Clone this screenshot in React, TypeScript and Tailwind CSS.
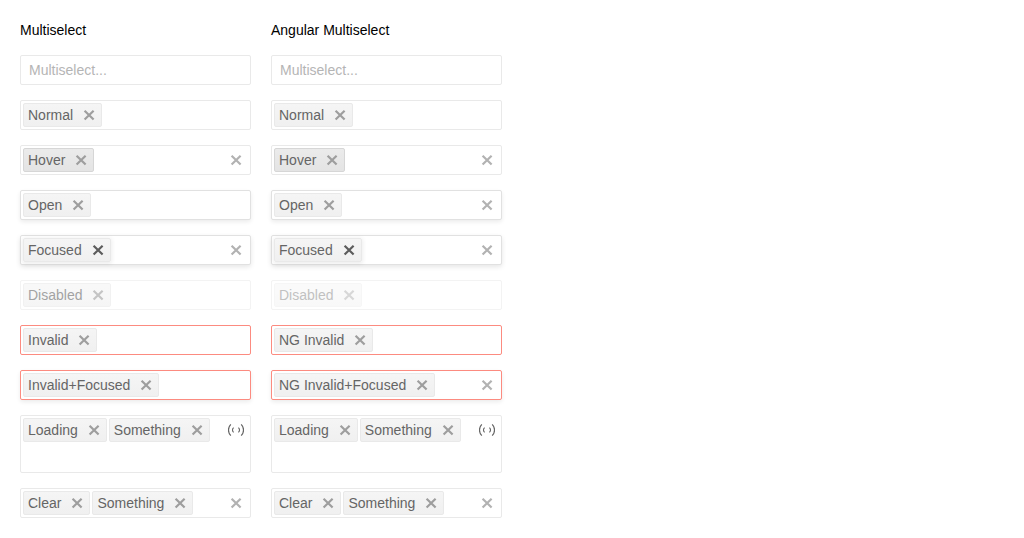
import React from 'react';
import clsx from 'clsx';

type Look = 'normal' | 'hover' | 'open' | 'focused' | 'disabled' | 'faded' | 'invalid' | 'invalidFocused';
type Trailing = 'clear' | 'loading';

interface Field {
  tags: string[];
  look: Look;
  trailing?: Trailing;
  wrapInput?: boolean;
}

const multiselect: Field[] = [
  { tags: [], look: 'normal' },
  { tags: ['Normal'], look: 'normal' },
  { tags: ['Hover'], look: 'hover', trailing: 'clear' },
  { tags: ['Open'], look: 'open' },
  { tags: ['Focused'], look: 'focused', trailing: 'clear' },
  { tags: ['Disabled'], look: 'disabled' },
  { tags: ['Invalid'], look: 'invalid' },
  { tags: ['Invalid+Focused'], look: 'invalidFocused' },
  { tags: ['Loading', 'Something'], look: 'normal', trailing: 'loading', wrapInput: true },
  { tags: ['Clear', 'Something'], look: 'normal', trailing: 'clear' },
];

const angularMultiselect: Field[] = [
  { tags: [], look: 'normal' },
  { tags: ['Normal'], look: 'normal' },
  { tags: ['Hover'], look: 'hover', trailing: 'clear' },
  { tags: ['Open'], look: 'open', trailing: 'clear' },
  { tags: ['Focused'], look: 'focused', trailing: 'clear' },
  { tags: ['Disabled'], look: 'faded' },
  { tags: ['NG Invalid'], look: 'invalid' },
  { tags: ['NG Invalid+Focused'], look: 'invalidFocused', trailing: 'clear' },
  { tags: ['Loading', 'Something'], look: 'normal', trailing: 'loading', wrapInput: true },
  { tags: ['Clear', 'Something'], look: 'normal', trailing: 'clear' },
];

const frame: Record<Look, string> = {
  normal: 'border-[#e9e9e9]',
  hover: 'border-[#e9e9e9]',
  open: 'border-[#e1e1e1] shadow-[0_2px_4px_rgba(0,0,0,0.08)]',
  focused: 'border-[#e1e1e1] shadow-[0_2px_5px_rgba(0,0,0,0.1)]',
  disabled: 'border-[#f3f3f3]',
  faded: 'border-[#f3f3f3]',
  invalid: 'border-[#fc8b80]',
  invalidFocused: 'border-[#fc8b80] shadow-[0_2px_4px_rgba(0,0,0,0.08)]',
};

function CloseIcon() {
  return (
    <svg viewBox="0 0 16 16" className="block size-4" fill="none" stroke="currentColor" strokeWidth="2.2" aria-hidden="true">
      <path d="M3.6 3.7l9 8.8M12.6 3.7l-9 8.8" />
    </svg>
  );
}

function LoadingIcon() {
  return (
    <svg viewBox="0 0 16 16" className="block size-4" fill="none" stroke="currentColor" role="img" aria-label="Loading">
      <path strokeWidth="1.2" d="M2.8 2.3C-.3 5.5-.3 10.5 2.8 13.7M13.2 2.3c3.1 3.2 3.1 8.2 0 11.4" />
      <path strokeWidth="1.1" d="M5.6 5.6c-1.5 1.4-1.5 3.4 0 4.8M10.4 5.6c1.5 1.4 1.5 3.4 0 4.8" />
    </svg>
  );
}

function Tag({ text, look }: { text: string; look: Look }) {
  const inactive = look === 'disabled' || look === 'faded';
  return (
    <div
      className={clsx(
        'my-0.5 ml-0.5 flex h-6 items-center rounded-xs border bg-linear-to-b pr-1 pl-1 text-[#656565]',
        look === 'hover' ? 'border-[#d6d6d6] from-[#ebebeb] to-[#e4e4e4]' : 'border-[#e9e9e9] from-[#f5f5f5] to-[#f0f0f0]',
        look === 'focused' && 'shadow-[0_1px_4px_1px_rgba(0,0,0,0.07)]',
        look === 'disabled' && 'opacity-60',
        look === 'faded' && 'opacity-40',
      )}
    >
      <span className="mr-2 whitespace-nowrap">{text}</span>
      <button
        type="button"
        disabled={inactive}
        aria-label={`Remove ${text}`}
        className={clsx(look === 'focused' ? 'text-[#5c5c5c]' : 'text-[#9e9e9e]')}
      >
        <CloseIcon />
      </button>
    </div>
  );
}

function MultiSelect({ field, title }: { field: Field; title: string }) {
  const { tags, look, trailing, wrapInput } = field;
  return (
    <div className={clsx('flex items-start rounded-xs border bg-white', frame[look])}>
      <div className="flex min-w-0 flex-1 flex-wrap">
        {tags.map((tag) => (
          <Tag key={tag} text={tag} look={look} />
        ))}
        <input
          type="text"
          aria-label={`${title} ${tags.join(', ')}`}
          placeholder={tags.length ? undefined : 'Multiselect...'}
          disabled={look === 'disabled' || look === 'faded'}
          aria-invalid={look === 'invalid' || look === 'invalidFocused'}
          className={clsx(
            'h-7 min-w-0 flex-1 bg-transparent px-2 text-[#656565] outline-none placeholder:text-[#b5b5b5]',
            wrapInput && 'basis-full',
          )}
        />
      </div>
      {trailing === 'clear' && (
        <button type="button" aria-label="Clear" className="flex size-7 shrink-0 items-center justify-center text-[#b2b2b2]">
          <CloseIcon />
        </button>
      )}
      {trailing === 'loading' && (
        <span className="flex size-7 shrink-0 items-center justify-center text-[#656565]">
          <LoadingIcon />
        </span>
      )}
    </div>
  );
}

function Column({ title, fields }: { title: string; fields: Field[] }) {
  return (
    <section className="flex w-[231px] flex-col gap-[15px]">
      <h2 className="text-black">{title}</h2>
      {fields.map((field, i) => (
        <MultiSelect key={i} field={field} title={title} />
      ))}
    </section>
  );
}

export default function App() {
  return (
    <main className="flex flex-wrap gap-5 bg-white p-5 font-['Liberation_Sans',Arial,sans-serif] text-sm leading-5">
      <Column title="Multiselect" fields={multiselect} />
      <Column title="Angular Multiselect" fields={angularMultiselect} />
    </main>
  );
}
